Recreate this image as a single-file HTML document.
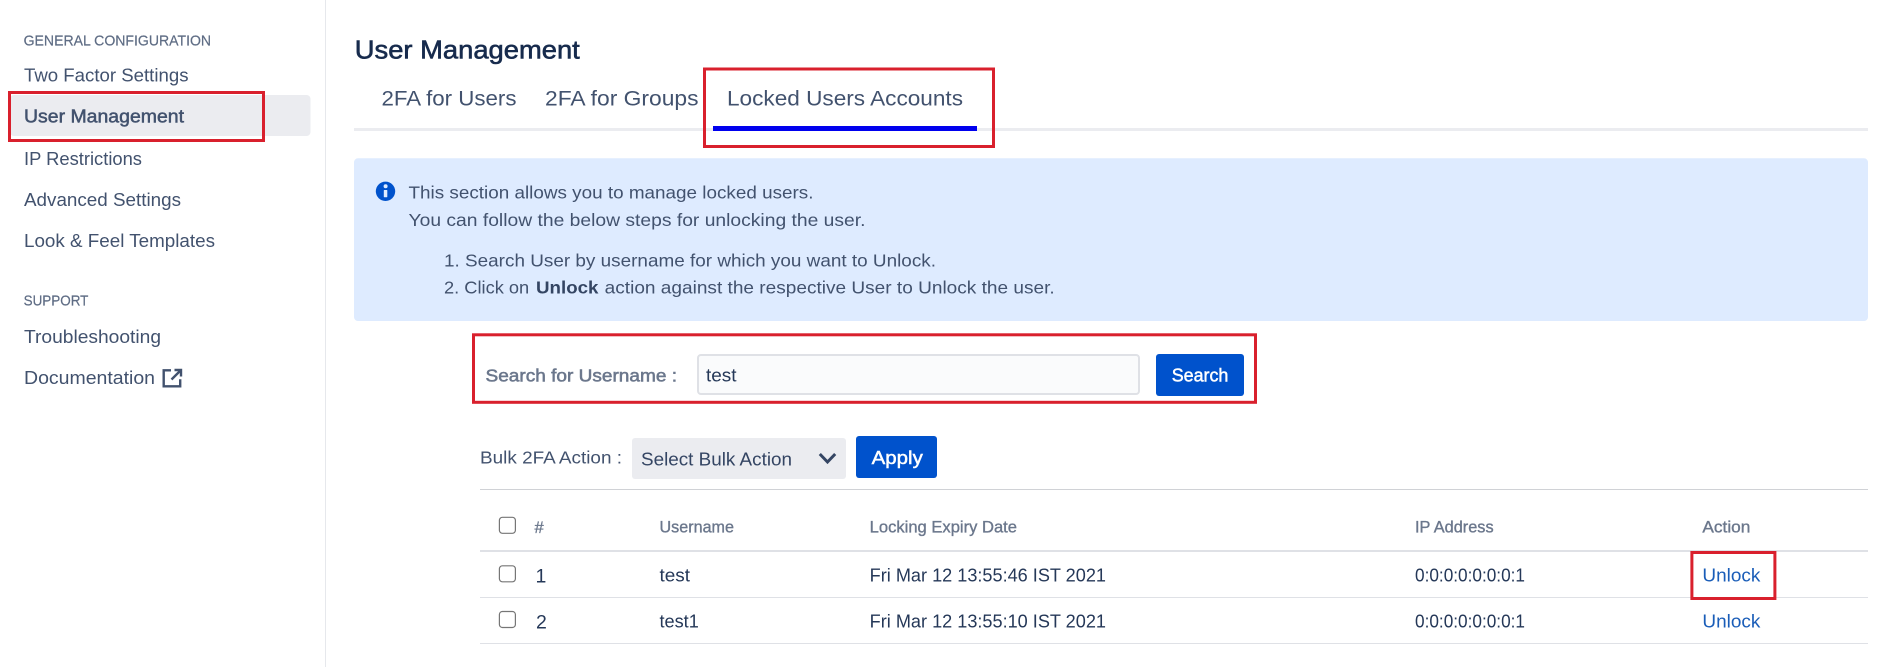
<!DOCTYPE html>
<html>
<head>
<meta charset="utf-8">
<title>User Management</title>
<style>
html,body{margin:0;padding:0;background:#fff;width:1887px;height:667px;overflow:hidden}
svg{display:block}
text{font-family:"Liberation Sans",sans-serif;white-space:pre;}
.nav{font-size:18.5px;fill:#42526E}
.cap{font-size:14.5px;fill:#5E6C84;stroke:#5E6C84;stroke-width:.2}
.tab{font-size:21.5px;fill:#42526E}
.al{font-size:17.5px;fill:#42526E}
.th{font-size:16.5px;fill:#6B778C;stroke:#6B778C;stroke-width:.35}
.td{font-size:18px;fill:#253858}
.lnk{font-size:18px;fill:#1A5DB8}
.btn{font-size:18px;fill:#fff;stroke:#fff;stroke-width:.45}
.red{fill:none;stroke:#D9202D;stroke-width:3}
.cb{fill:#fff;stroke:#767676;stroke-width:1.2}
</style>
</head>
<body>
<svg width="1887" height="667" viewBox="0 0 1887 667" xmlns="http://www.w3.org/2000/svg">
<rect width="1887" height="667" fill="#fff"/>
<rect x="325" y="0" width="1" height="667" fill="#E6E8EC"/>

<!-- Sidebar -->
<rect x="10" y="95" width="300.5" height="41" rx="4" fill="#EBECF0"/>
<text class="cap" x="23.6" y="45.5" textLength="187.5" lengthAdjust="spacingAndGlyphs">GENERAL CONFIGURATION</text>
<text class="nav" x="24" y="81.5" textLength="164.5" lengthAdjust="spacingAndGlyphs">Two Factor Settings</text>
<text class="nav" x="24" y="122.5" textLength="160" lengthAdjust="spacingAndGlyphs" style="stroke:#42526E;stroke-width:.5">User Management</text>
<text class="nav" x="24" y="164.8" textLength="118" lengthAdjust="spacingAndGlyphs">IP Restrictions</text>
<text class="nav" x="24" y="205.8" textLength="157" lengthAdjust="spacingAndGlyphs">Advanced Settings</text>
<text class="nav" x="24" y="246.8" textLength="191" lengthAdjust="spacingAndGlyphs">Look &amp; Feel Templates</text>
<text class="cap" x="23.6" y="305.5" textLength="64.8" lengthAdjust="spacingAndGlyphs">SUPPORT</text>
<text class="nav" x="24" y="342.8" textLength="137" lengthAdjust="spacingAndGlyphs">Troubleshooting</text>
<text class="nav" x="24" y="383.8" textLength="131" lengthAdjust="spacingAndGlyphs">Documentation</text>
<path d="M171 370.300h-7.300v16h16.500v-7" fill="none" stroke="#42526E" stroke-width="2.400"/>
<path d="M171.500 379.500l8.500-8.500M174.500 370h6.500v6.500" fill="none" stroke="#42526E" stroke-width="2.400"/>
<rect class="red" x="9.500" y="92.500" width="254" height="48"/>

<!-- Heading and tabs -->
<text x="354.800" y="58.500" font-size="26" fill="#172B4D" stroke="#172B4D" stroke-width=".6" textLength="225" lengthAdjust="spacingAndGlyphs">User Management</text>
<text class="tab" x="381.500" y="105.500" textLength="135" lengthAdjust="spacingAndGlyphs">2FA for Users</text>
<text class="tab" x="545" y="105.500" textLength="153.500" lengthAdjust="spacingAndGlyphs">2FA for Groups</text>
<text class="tab" x="727" y="105.500" textLength="236" lengthAdjust="spacingAndGlyphs">Locked Users Accounts</text>
<rect x="354" y="128" width="1514" height="3" fill="#EBECF0"/>
<rect x="713" y="126" width="264" height="5" fill="#0000EE"/>
<rect class="red" x="704.500" y="69" width="289" height="77.500"/>

<!-- Info box -->
<rect x="354" y="158.300" width="1514" height="162.700" rx="4" fill="#DEEBFF"/>
<circle cx="385.500" cy="191.300" r="9.700" fill="#0052CC"/>
<rect x="383.800" y="190" width="3.500" height="7.200" rx=".5" fill="#DEEBFF"/>
<circle cx="385.600" cy="186.300" r="2" fill="#DEEBFF"/>
<text class="al" x="408.500" y="198.500" textLength="405" lengthAdjust="spacingAndGlyphs">This section allows you to manage locked users.</text>
<text class="al" x="408.500" y="225.800" textLength="457" lengthAdjust="spacingAndGlyphs">You can follow the below steps for unlocking the user.</text>
<text class="al" x="444" y="266.500" textLength="492" lengthAdjust="spacingAndGlyphs">1. Search User by username for which you want to Unlock.</text>
<text class="al" x="444" y="293.500" textLength="85.200" lengthAdjust="spacingAndGlyphs">2. Click on</text>
<text class="al" x="536" y="293.500" textLength="62.500" lengthAdjust="spacingAndGlyphs" font-weight="bold" style="fill:#344563">Unlock</text>
<text class="al" x="604.700" y="293.500" textLength="450" lengthAdjust="spacingAndGlyphs">action against the respective User to Unlock the user.</text>

<!-- Search -->
<rect class="red" x="473.500" y="334.800" width="782" height="67.500"/>
<text x="485.500" y="381.500" font-size="17.500" fill="#6B778C" stroke="#6B778C" stroke-width=".55" textLength="191.500" lengthAdjust="spacingAndGlyphs">Search for Username :</text>
<rect x="698" y="355" width="441" height="39" rx="3" fill="#FAFBFC" stroke="#DFE1E6" stroke-width="2"/>
<text x="706" y="381.500" font-size="18" fill="#253858" textLength="30.500" lengthAdjust="spacingAndGlyphs">test</text>
<rect x="1156" y="354" width="88" height="42" rx="3" fill="#0052CC"/>
<text class="btn" x="1171.700" y="381.500" textLength="56.700" lengthAdjust="spacingAndGlyphs">Search</text>

<!-- Bulk -->
<text x="480" y="463.500" font-size="17.500" fill="#42526E" textLength="142" lengthAdjust="spacingAndGlyphs">Bulk 2FA Action :</text>
<rect x="632" y="438" width="214" height="41" rx="3" fill="#EBECF0"/>
<text x="641" y="465.500" font-size="18" fill="#344563" textLength="151" lengthAdjust="spacingAndGlyphs">Select Bulk Action</text>
<path d="M819.800 454l7.700 8 7.700-8" fill="none" stroke="#344563" stroke-width="3"/>
<rect x="856" y="436" width="81" height="42" rx="3" fill="#0052CC"/>
<text class="btn" x="871.700" y="464.200" textLength="51.100" lengthAdjust="spacingAndGlyphs">Apply</text>
<rect x="480" y="489" width="1388" height="1" fill="#D0D2D6"/>

<!-- Table header -->
<rect class="cb" x="499.400" y="517.300" width="16" height="16" rx="3"/>
<text class="th" x="534.500" y="533" textLength="9.200" lengthAdjust="spacingAndGlyphs">#</text>
<text class="th" x="659.500" y="532.500" textLength="74.500" lengthAdjust="spacingAndGlyphs">Username</text>
<text class="th" x="869.700" y="532.500" textLength="147.300" lengthAdjust="spacingAndGlyphs">Locking Expiry Date</text>
<text class="th" x="1415" y="532.500" textLength="78.600" lengthAdjust="spacingAndGlyphs">IP Address</text>
<text class="th" x="1702.400" y="532.500" textLength="48" lengthAdjust="spacingAndGlyphs">Action</text>
<rect x="480" y="550" width="1388" height="2" fill="#DFE1E6"/>

<!-- Row 1 -->
<rect class="cb" x="499.400" y="565.800" width="16" height="16" rx="3"/>
<text class="td" x="535.500" y="582.500" font-size="19.500" style="font-size:19.500px">1</text>
<text class="td" x="659.500" y="581.500" textLength="30.500" lengthAdjust="spacingAndGlyphs">test</text>
<text class="td" x="869.700" y="581.500" textLength="236.300" lengthAdjust="spacingAndGlyphs">Fri Mar 12 13:55:46 IST 2021</text>
<text class="td" x="1415" y="581.500" textLength="110" lengthAdjust="spacingAndGlyphs">0:0:0:0:0:0:0:1</text>
<text class="lnk" x="1702.400" y="581.500" textLength="58" lengthAdjust="spacingAndGlyphs">Unlock</text>
<rect x="480" y="597" width="1388" height="1" fill="#DFE1E6"/>

<!-- Row 2 -->
<rect class="cb" x="499.400" y="611.500" width="16" height="16" rx="3"/>
<text class="td" x="536" y="628.300" style="font-size:19.500px">2</text>
<text class="td" x="659.500" y="627.500" textLength="39.300" lengthAdjust="spacingAndGlyphs">test1</text>
<text class="td" x="869.700" y="627.500" textLength="236.300" lengthAdjust="spacingAndGlyphs">Fri Mar 12 13:55:10 IST 2021</text>
<text class="td" x="1415" y="627.500" textLength="110" lengthAdjust="spacingAndGlyphs">0:0:0:0:0:0:0:1</text>
<text class="lnk" x="1702.400" y="627.500" textLength="58" lengthAdjust="spacingAndGlyphs">Unlock</text>
<rect x="480" y="643" width="1388" height="1" fill="#DFE1E6"/>

<rect class="red" x="1691.900" y="552.500" width="83" height="46"/>
</svg>
</body>
</html>
